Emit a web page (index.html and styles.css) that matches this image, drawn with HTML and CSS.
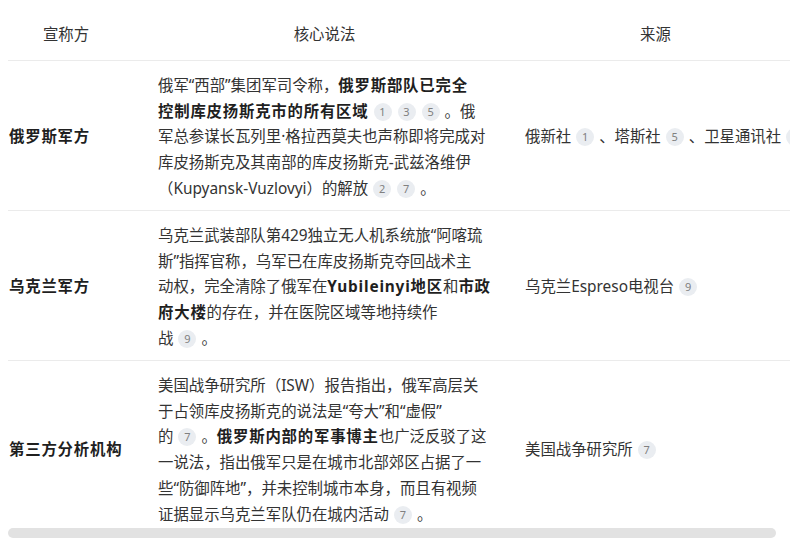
FILE: index.html
```html
<!doctype html>
<html lang="zh-CN">
<head>
	<meta charset="UTF-8">
	<title>库皮扬斯克控制权说法对比</title>
	<link rel="stylesheet" href="styles.css">
</head>
<body>
	<div class="table-box">
		<div class="table-wrap">
			<table class="claims">
				<colgroup>
					<col class="col-party">
					<col class="col-claim">
					<col class="col-source">
				</colgroup>
				<thead>
					<tr>
						<th>宣称方</th>
						<th>核心说法</th>
						<th>来源</th>
					</tr>
				</thead>
				<tbody>
					<tr>
						<td>俄罗斯军方</td>
						<td>俄军“西部”集团军司令称，<strong>俄罗斯部队已完全<br>控制库皮扬斯克市的所有区域</strong> <span class="cite">1</span> <span class="cite">3</span> <span class="cite">5</span> 。俄<br>军总参谋长瓦列里·格拉西莫夫也声称即将完成对<br>库皮扬斯克及其南部的库皮扬斯克-武兹洛维伊<br>（Kupyansk-Vuzlovyi）的解放 <span class="cite">2</span> <span class="cite">7</span> 。</td>
						<td>俄新社 <span class="cite">1</span> 、塔斯社 <span class="cite">5</span> 、卫星通讯社 <span class="cite">3</span></td>
					</tr>
					<tr>
						<td>乌克兰军方</td>
						<td>乌克兰武装部队第429独立无人机系统旅“阿喀琉<br>斯”指挥官称，乌军已在库皮扬斯克夺回战术主<br>动权，完全清除了俄军在<strong>Yubileinyi地区</strong>和<strong>市政<br>府大楼</strong>的存在，并在医院区域等地持续作<br>战 <span class="cite">9</span> 。</td>
						<td>乌克兰Espreso电视台 <span class="cite">9</span></td>
					</tr>
					<tr>
						<td>第三方分析机构</td>
						<td>美国战争研究所（ISW）报告指出，俄军高层关<br>于占领库皮扬斯克的说法是“夸大”和“虚假”<br>的 <span class="cite">7</span> 。<strong>俄罗斯内部的军事博主</strong>也广泛反驳了这<br>一说法，指出俄军只是在城市北部郊区占据了一<br>些“防御阵地”，并未控制城市本身，而且有视频<br>证据显示乌克兰军队仍在城内活动 <span class="cite">7</span> 。</td>
						<td>美国战争研究所 <span class="cite">7</span></td>
					</tr>
				</tbody>
			</table>
		</div>
		<div class="hscroll"></div>
	</div>
</body>
</html>
```

FILE: styles.css
```css
html, body{
	margin: 0;
	padding: 0;
}
body{
	padding: 0 8px;
	font-family: "Noto Sans", "Noto Sans CJK SC", sans-serif;
	color: #333;
	background-color: #fff;
}
.table-box{
	width: 782px;
}
.table-wrap{
	overflow: hidden;
}
.hscroll{
	width: 768px;
	height: 10px;
	border-radius: 5px;
	background-color: #e2e2e2;
}
.claims{
	width: 795px;
	table-layout: fixed;
	border-collapse: collapse;
	font-size: 15.4px;
	line-height: 25.8px;
}
.col-party{
	width: 133px;
}
.col-claim{
	width: 367px;
}
.col-source{
	width: 295px;
}
.claims th{
	padding: 22px 17px 12px;
	font-weight: normal;
	text-align: center;
	color: #333;
	border-bottom: 1px solid #ebebeb;
}
.claims th:first-child{
	padding-left: 0;
}
.claims td{
	padding: 12px 17px 8px;
	text-align: left;
	vertical-align: middle;
	white-space: nowrap;
	border-bottom: 1px solid #ebebeb;
}
.claims td:first-child{
	padding-left: 1px;
	font-weight: bold;
	letter-spacing: 0.8px;
	color: #1f1f1f;
}
.claims tbody tr:last-child td{
	padding-bottom: 0;
	border-bottom: none;
}
.claims strong{
	color: #1f1f1f;
	letter-spacing: 0.8px;
}
.cite{
	display: inline-block;
	width: 18px;
	height: 18px;
	margin: 0 1px;
	border-radius: 50%;
	background-color: #eaedf1;
	color: #808080;
	font-size: 11px;
	font-weight: normal;
	letter-spacing: 0;
	line-height: 18px;
	text-align: center;
	vertical-align: 1px;
}
```
